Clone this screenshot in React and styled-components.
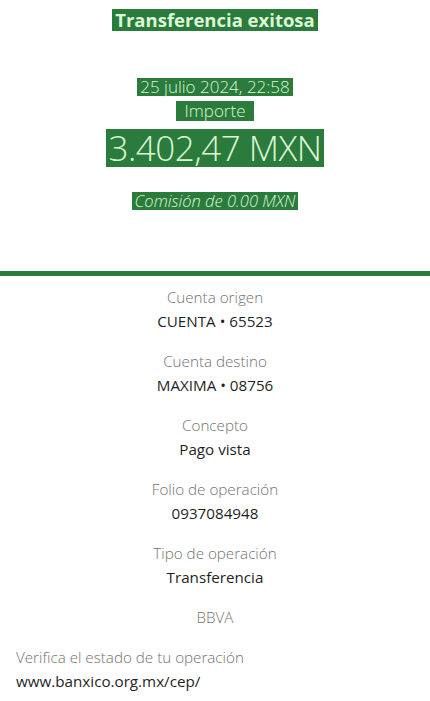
import React from "react";
import styled, { createGlobalStyle } from "styled-components";

const Global = createGlobalStyle`
  html, body { margin: 0; padding: 0; background: #ffffff; }
  body { font-family: "Open Sans", "Liberation Sans", sans-serif; }
`;

const Page = styled.div`
  width: 430px;
  height: 701px;
  display: flex;
  flex-direction: column;
  background: #ffffff;
  overflow: hidden;
`;

const Header = styled.header`
  height: 271px;
  flex-shrink: 0;
  display: flex;
  flex-direction: column;
  align-items: center;
  padding-top: 9px;
  box-sizing: border-box;
`;

const Mark = styled.span`
  display: inline-block;
  background: #2b7b3c;
  color: #dcf6d6;
  padding: ${(p) => p.$pad || "0 3px"};
  font-size: ${(p) => p.$size}px;
  font-weight: ${(p) => p.$weight || 300};
  font-style: ${(p) => (p.$italic ? "italic" : "normal")};
  line-height: ${(p) => p.$lh || 1.3};
  margin-top: ${(p) => p.$mt || 0}px;
  letter-spacing: ${(p) => p.$ls || 0}px;
  white-space: nowrap;
`;

const Rule = styled.div`
  height: 5px;
  background: #2b7b3c;
  flex-shrink: 0;
`;

const List = styled.section`
  display: flex;
  flex-direction: column;
  align-items: center;
  padding-top: 11px;
  gap: 19px;
`;

const Item = styled.div`
  display: flex;
  flex-direction: column;
  align-items: center;
  gap: 3px;
`;

const Label = styled.div`
  font-size: 15.2px;
  font-weight: 300;
  color: #727272;
  line-height: 21px;
`;

const Value = styled.div`
  font-size: 15.2px;
  font-weight: 400;
  color: #1f1f1f;
  line-height: 21px;
`;

const Footer = styled.div`
  padding: 19px 16px 0;
  display: flex;
  flex-direction: column;
  gap: 3px;
`;

const rows = [
  ["Cuenta origen", "CUENTA • 65523"],
  ["Cuenta destino", "MAXIMA • 08756"],
  ["Concepto", "Pago vista"],
  ["Folio de operación", "0937084948"],
  ["Tipo de operación", "Transferencia"],
];

export default function App() {
  return (
    <Page>
      <Global />
      <Header>
        <Mark $size={18.5} $weight={700} $lh={1.2}>Transferencia exitosa</Mark>
        <Mark $size={17} $mt={47} $lh={1.05}>25 julio 2024, 22:58</Mark>
        <Mark $size={17} $mt={5} $lh={1.15} $pad="0 8px">Importe</Mark>
        <Mark $size={35} $mt={8} $lh={1.1} $pad="0 2px" $ls={-0.5}>3.402,47 MXN</Mark>
        <Mark $size={16.5} $mt={25} $italic $lh={1.1}>Comisión de 0.00 MXN</Mark>
      </Header>
      <Rule />
      <List>
        {rows.map(([l, v]) => (
          <Item key={l}>
            <Label>{l}</Label>
            <Value>{v}</Value>
          </Item>
        ))}
        <Item>
          <Label>BBVA</Label>
        </Item>
      </List>
      <Footer>
        <Label>Verifica el estado de tu operación</Label>
        <Value>www.banxico.org.mx/cep/</Value>
      </Footer>
    </Page>
  );
}
